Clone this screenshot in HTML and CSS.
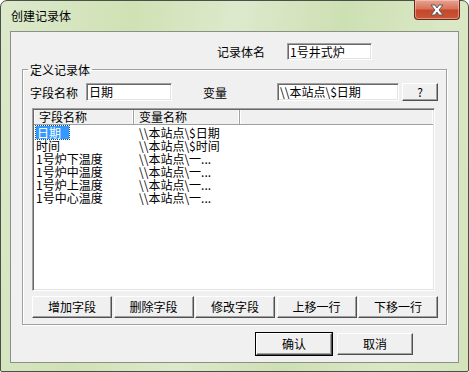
FILE: index.html
```html
<!DOCTYPE html>
<html lang="zh-CN">
  <head>
    <meta charset="utf-8" />
    <title>创建记录体</title>
    <link rel="stylesheet" href="styles.css">
  </head>
  <body>
    <div class="window">
      <div class="titlebar">
        <span class="title">创建记录体</span>
        <button class="close" type="button">
          <svg width="18" height="12" viewBox="0 0 18 12">
            <path d="M3 1h4l2 3 2-3h4l-4 5 4 5h-4l-2-3-2 3H3l4-5z" fill="#fff" stroke="#5a5a5a" stroke-width="1" stroke-linejoin="round" />
          </svg>
        </button>
      </div>

      <div class="client">
        <div class="name-row">
          <span class="label">记录体名</span>
          <span class="edit edit-name">1号井式炉</span>
        </div>

        <fieldset class="group">
          <legend>定义记录体</legend>
          <div class="group-body">
            <div class="field-row">
              <span class="label">字段名称</span>
              <span class="edit edit-field">日期</span>
              <span class="label label-var">变量</span>
              <span class="edit edit-var">\\本站点\$日期</span>
              <button class="btn btn-ask" type="button">?</button>
            </div>

            <div class="list">
              <div class="list-head">
                <span class="col col-1">字段名称</span>
                <span class="col col-2">变量名称</span>
                <span class="col col-3"></span>
              </div>
              <div class="list-body">
                <div class="row"><span class="cell cell-1"><span class="sel">日期</span></span><span class="cell">\\本站点\$日期</span></div>
                <div class="row"><span class="cell cell-1">时间</span><span class="cell">\\本站点\$时间</span></div>
                <div class="row"><span class="cell cell-1">1号炉下温度</span><span class="cell">\\本站点\一...</span></div>
                <div class="row"><span class="cell cell-1">1号炉中温度</span><span class="cell">\\本站点\一...</span></div>
                <div class="row"><span class="cell cell-1">1号炉上温度</span><span class="cell">\\本站点\一...</span></div>
                <div class="row"><span class="cell cell-1">1号中心温度</span><span class="cell">\\本站点\一...</span></div>
              </div>
            </div>

            <div class="btn-row">
              <button class="btn" type="button">增加字段</button>
              <button class="btn" type="button">删除字段</button>
              <button class="btn" type="button">修改字段</button>
              <button class="btn" type="button">上移一行</button>
              <button class="btn" type="button">下移一行</button>
            </div>
          </div>
        </fieldset>

        <div class="dialog-btns">
          <button class="btn btn-dlg btn-default" type="button">确认</button>
          <button class="btn btn-dlg" type="button">取消</button>
        </div>
      </div>
    </div>
  </body>
</html>
```

FILE: styles.css
```css
* {
  box-sizing: border-box;
}

body {
  margin: 0;
  padding: 0;
  font-family: "Noto Sans CJK SC", "Liberation Sans", sans-serif;
  font-size: 12px;
  color: #000;
  background: #fff;
}

.window {
  width: 469px;
  height: 372px;
  border: 1px solid #4a4f47;
  border-radius: 7px 7px 2px 2px;
  background: linear-gradient(100deg, #dce9cc 0%, #cfe2b4 25%, #dde9cc 45%, #cde0b3 65%, #dae8c6 85%, #d3e4bb 100%);
  display: flex;
  flex-direction: column;
}

.titlebar {
  height: 30px;
  display: flex;
  align-items: flex-start;
  padding-left: 10px;
}

.title {
  margin-top: 7px;
  line-height: 16px;
  font-size: 12px;
}

.close {
  margin-left: auto;
  margin-right: 8px;
  width: 46px;
  height: 20px;
  margin-top: -1px;
  padding: 0;
  border: 1px solid #6b2a1c;
  border-top: none;
  border-radius: 0 0 4px 4px;
  background: linear-gradient(#e6a493 0%, #d8745b 45%, #c4472a 55%, #c9563a 100%);
  box-shadow: inset 0 0 0 1px rgba(255, 220, 210, 0.45);
  display: flex;
  align-items: center;
  justify-content: center;
}

.client {
  margin: 0 9px;
  height: 332px;
  border: 1px solid #8b8f88;
  background: #f0f0f0;
}

.label {
  line-height: 17px;
  white-space: nowrap;
}

.edit {
  display: block;
  height: 17px;
  background: #fff;
  border-top: 1px solid #a0a0a0;
  border-left: 1px solid #a0a0a0;
  border-right: 1px solid #fff;
  border-bottom: 1px solid #fff;
  box-shadow: inset 1px 1px 0 #696969, inset -1px -1px 0 #e3e3e3;
  padding: 0 0 0 2px;
  line-height: 15px;
  white-space: nowrap;
  overflow: hidden;
}

.name-row {
  display: flex;
  padding: 11px 0 0 206px;
}

.edit-name {
  margin-left: 22px;
  width: 85px;
}

.group {
  margin: 3px 11px 0 11px;
  padding: 0;
  border: 1px solid #a0a0a0;
  box-shadow: inset 1px 1px 0 #fff, 1px 1px 0 #fff;
}

.group legend {
  margin-left: 5px;
  padding: 0 2px;
  line-height: 13px;
}

.group-body {
  padding: 7px 0 6px 7px;
}

.field-row {
  display: flex;
  align-items: center;
  height: 18px;
}

.field-row .edit {
  height: 18px;
  line-height: 16px;
}

.edit-field {
  margin-left: 8px;
  width: 86px;
}

.label-var {
  margin-left: 31px;
}

.edit-var {
  margin-left: 50px;
  width: 122px;
}

.btn {
  font: inherit;
  color: #000;
  padding: 0;
  background: #f0f0f0;
  border-top: 1px solid #fff;
  border-left: 1px solid #fff;
  border-right: 1px solid #505050;
  border-bottom: 1px solid #505050;
  box-shadow: inset -1px -1px 0 #a0a0a0;
  line-height: 16px;
}

.btn-ask {
  margin-left: 3px;
  width: 36px;
  height: 18px;
}

.list {
  margin: 7px 0 0 2px;
  width: 403px;
  height: 183px;
  background: #fff;
  border-top: 1px solid #a0a0a0;
  border-left: 1px solid #a0a0a0;
  border-right: 1px solid #fff;
  border-bottom: 1px solid #fff;
  box-shadow: inset 1px 1px 0 #696969, inset -1px -1px 0 #e3e3e3;
  padding: 1px 1px 0 1px;
  overflow: hidden;
}

.list-head {
  display: flex;
  height: 15px;
  background: #f0f0f0;
  border-bottom: 1px solid #a0a0a0;
}

.col {
  line-height: 14px;
  padding-left: 5px;
  border-right: 1px solid #a0a0a0;
  box-shadow: inset -1px 0 0 #fff, inset 1px 0 0 #fff;
  white-space: nowrap;
}

.col-1 {
  width: 100px;
}

.col-2 {
  width: 106px;
}

.col-3 {
  flex: 1;
  border-right: none;
}

.list-body {
  padding-top: 1px;
}

.row {
  display: flex;
  height: 13px;
  line-height: 13px;
  white-space: nowrap;
}

.cell-1 {
  width: 105px;
  padding-left: 2px;
}

.sel {
  display: inline-block;
  background: #3399ff;
  color: #fff;
  padding: 0 8px 0 1px;
  outline: 1px dotted #1a4f8a;
}

.btn-row {
  display: grid;
  grid-template-columns: repeat(5, 80px);
  gap: 1.5px;
  margin: 5px 0 0 2px;
}

.btn-row .btn {
  height: 22px;
}

.dialog-btns {
  display: flex;
  justify-content: flex-end;
  gap: 5px;
  padding: 8px 45px 0 0;
}

.btn-dlg {
  width: 76px;
  height: 22px;
}

.btn-default {
  outline: 1px solid #000;
}
```
